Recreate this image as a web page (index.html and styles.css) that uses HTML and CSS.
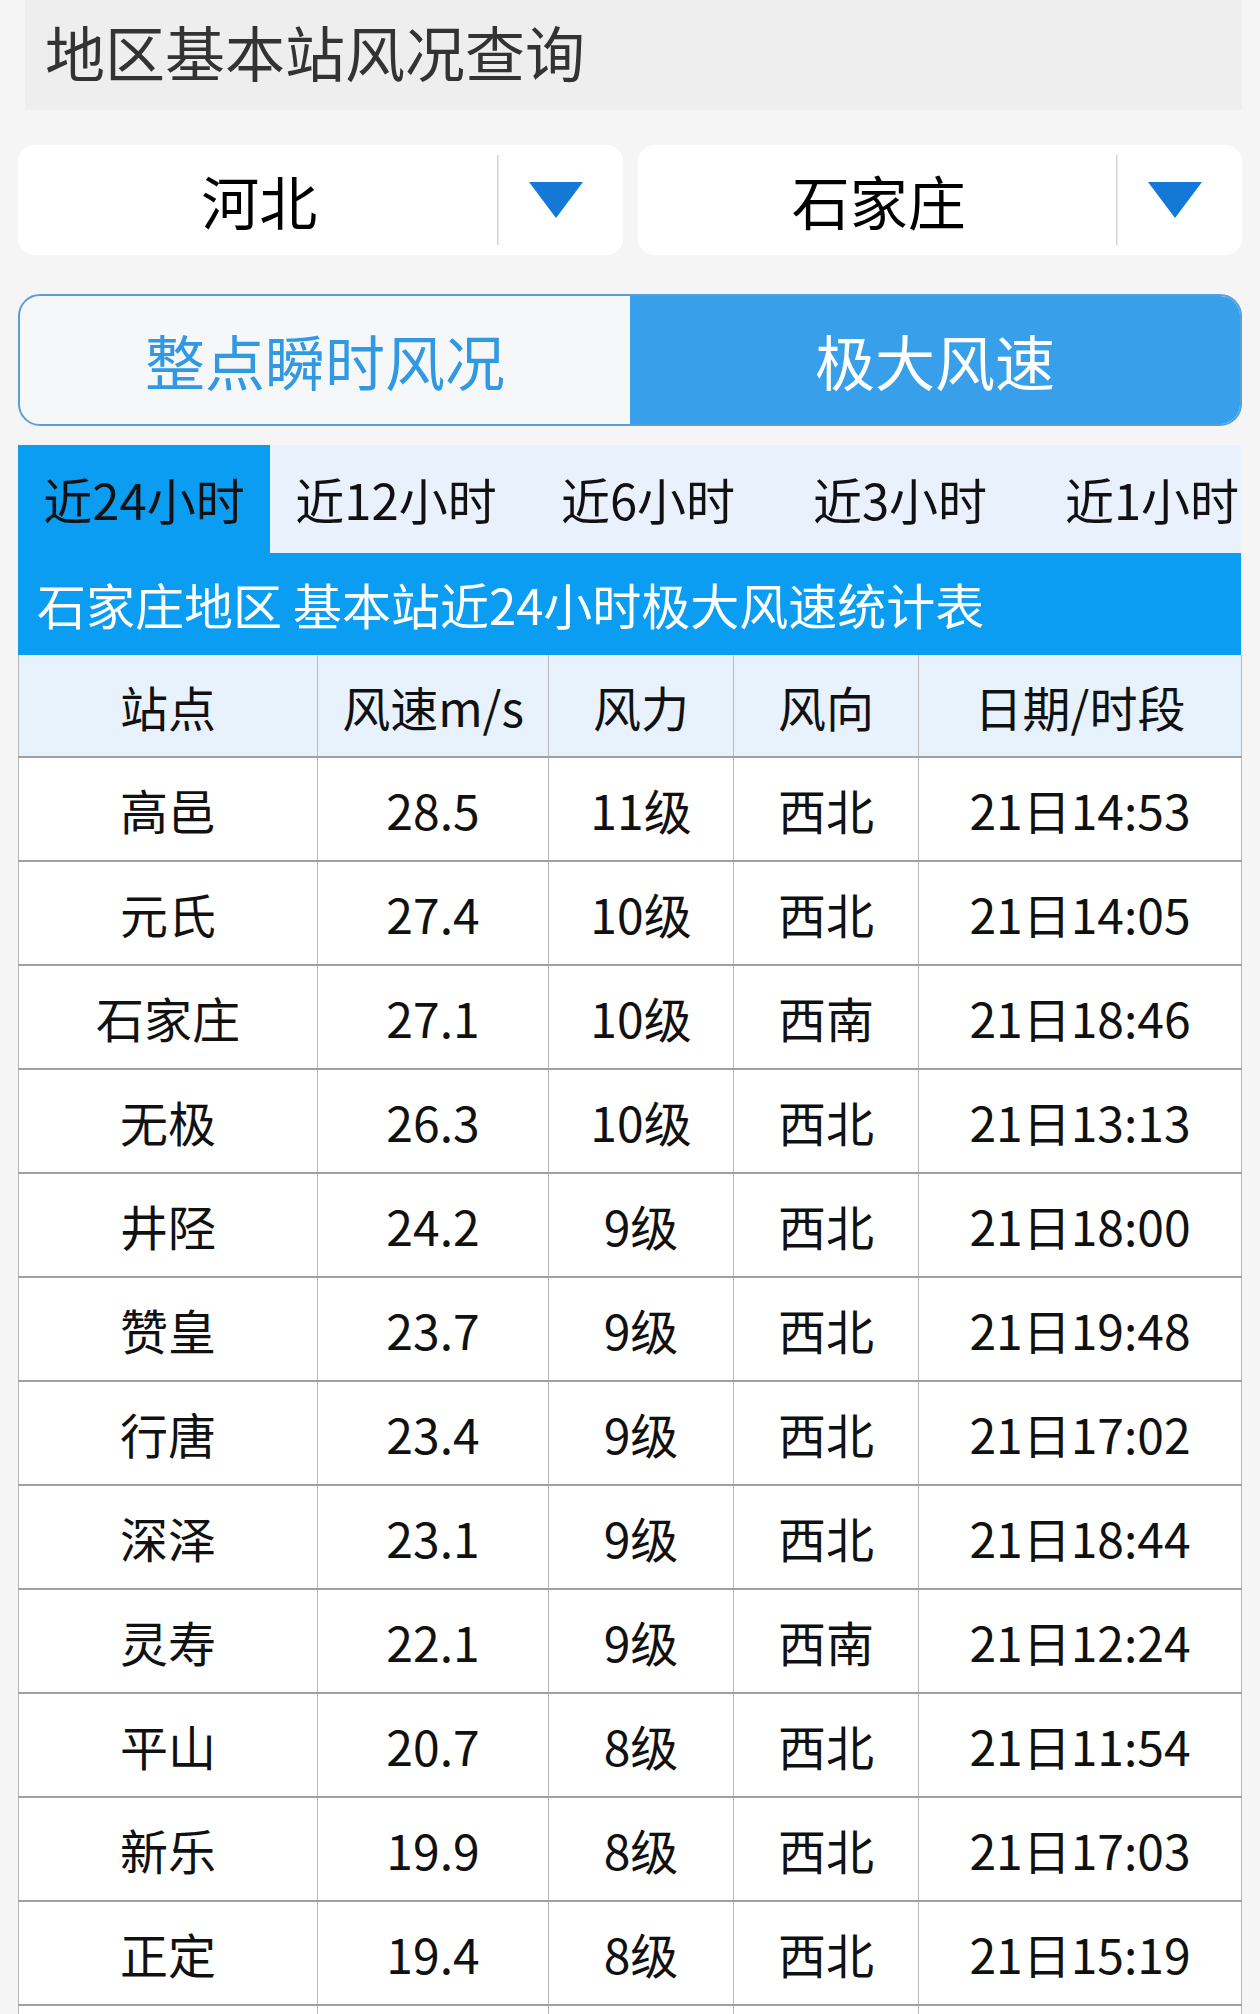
FILE: index.html
```html
<!DOCTYPE html>
<html lang="zh-CN">
<head>
<meta charset="utf-8">
<title>地区基本站风况查询</title>
<link rel="stylesheet" href="styles.css">
</head>
<body>
<div class="page">
  <div class="topbar"><h1 class="title">地区基本站风况查询</h1></div>

  <div class="selects">
    <div class="select">
      <div class="sel-text">河北</div>
      <div class="sel-sep"></div>
      <div class="sel-arrow"><span class="tri"></span></div>
    </div>
    <div class="select">
      <div class="sel-text">石家庄</div>
      <div class="sel-sep"></div>
      <div class="sel-arrow"><span class="tri"></span></div>
    </div>
  </div>

  <div class="toggle">
    <div class="tg-item">整点瞬时风况</div>
    <div class="tg-item tg-active">极大风速</div>
  </div>

  <div class="tabs">
    <div class="tab tab-active">近24小时</div>
    <div class="tab">近12小时</div>
    <div class="tab">近6小时</div>
    <div class="tab">近3小时</div>
    <div class="tab">近1小时</div>
  </div>

  <div class="caption">石家庄地区 基本站近24小时极大风速统计表</div>

  <table class="grid">
    <colgroup>
      <col class="c1"><col class="c2"><col class="c3"><col class="c4"><col class="c5">
    </colgroup>
    <thead>
      <tr><th>站点</th><th>风速m/s</th><th>风力</th><th>风向</th><th>日期/时段</th></tr>
    </thead>
    <tbody>
      <tr><td>高邑</td><td>28.5</td><td>11级</td><td>西北</td><td>21日14:53</td></tr>
      <tr><td>元氏</td><td>27.4</td><td>10级</td><td>西北</td><td>21日14:05</td></tr>
      <tr><td>石家庄</td><td>27.1</td><td>10级</td><td>西南</td><td>21日18:46</td></tr>
      <tr><td>无极</td><td>26.3</td><td>10级</td><td>西北</td><td>21日13:13</td></tr>
      <tr><td>井陉</td><td>24.2</td><td>9级</td><td>西北</td><td>21日18:00</td></tr>
      <tr><td>赞皇</td><td>23.7</td><td>9级</td><td>西北</td><td>21日19:48</td></tr>
      <tr><td>行唐</td><td>23.4</td><td>9级</td><td>西北</td><td>21日17:02</td></tr>
      <tr><td>深泽</td><td>23.1</td><td>9级</td><td>西北</td><td>21日18:44</td></tr>
      <tr><td>灵寿</td><td>22.1</td><td>9级</td><td>西南</td><td>21日12:24</td></tr>
      <tr><td>平山</td><td>20.7</td><td>8级</td><td>西北</td><td>21日11:54</td></tr>
      <tr><td>新乐</td><td>19.9</td><td>8级</td><td>西北</td><td>21日17:03</td></tr>
      <tr><td>正定</td><td>19.4</td><td>8级</td><td>西北</td><td>21日15:19</td></tr>
      <tr><td></td><td></td><td></td><td></td><td></td></tr>
    </tbody>
  </table>
</div>
</body>
</html>
```

FILE: styles.css
```css
* { box-sizing: border-box; }

html, body {
  margin: 0;
  padding: 0;
  background: #f5f5f5;
  font-family: "Noto Sans CJK SC", "Noto Sans", sans-serif;
  color: #111;
}

.page {
  width: 1260px;
  padding: 0 18px;
}

.topbar {
  height: 110px;
  margin-left: 7px;
  background: #eeeeee;
  display: flex;
  align-items: center;
  padding-left: 20px;
  padding-bottom: 8px;
}

.title {
  margin: 0;
  font-size: 60px;
  font-weight: 400;
  color: #333;
  line-height: 1;
}

.selects {
  margin-top: 35px;
  display: flex;
  gap: 15px;
}

.select {
  flex: 1;
  height: 110px;
  background: #fff;
  border-radius: 16px;
  display: flex;
  align-items: center;
}

.sel-text {
  flex: 1;
  text-align: center;
  font-size: 58px;
  line-height: 1;
  color: #000;
  padding-left: 4px;
}

.sel-sep {
  width: 2px;
  height: 90px;
  background: linear-gradient(to right, #cfcfcf, #efefef);
}

.sel-arrow {
  width: 124px;
  display: flex;
  justify-content: center;
  padding-right: 10px;
}

.tri {
  width: 0;
  height: 0;
  border-left: 27px solid transparent;
  border-right: 27px solid transparent;
  border-top: 36px solid #1479d6;
}

.toggle {
  margin-top: 39px;
  height: 132px;
  display: flex;
  border: 2px solid #5b9edb;
  border-radius: 22px;
  overflow: hidden;
  background: #f6f7f9;
}

.tg-item {
  flex: 1;
  display: flex;
  align-items: center;
  justify-content: center;
  font-size: 60px;
  color: #3198e2;
  line-height: 1;
}

.tg-active {
  background: #38a0ea;
  color: #fff;
}

.tabs {
  margin-top: 19px;
  width: 1223px;
  height: 108px;
  background: #e9f2fc;
  display: flex;
  overflow: hidden;
  white-space: nowrap;
}

.tab {
  flex: 0 0 252px;
  text-align: center;
  font-size: 49px;
  line-height: 108px;
  color: #111;
}

.tab-active {
  background: #0a9df2;
}

.caption {
  width: 1223px;
  height: 102px;
  background: #0a9df2;
  color: #fff;
  font-size: 49px;
  line-height: 102px;
  padding-left: 19px;
  white-space: nowrap;
}

.grid {
  width: 1223px;
  border-collapse: collapse;
  table-layout: fixed;
  background: #fff;
}

.c1 { width: 299px; }
.c2 { width: 231px; }
.c3 { width: 185px; }
.c4 { width: 185px; }
.c5 { width: 323px; }

.grid th,
.grid td {
  padding: 0;
  text-align: center;
  font-size: 48px;
  font-weight: 400;
  color: #111;
  border-left: 1px solid #b8b8b8;
  border-right: 1px solid #b8b8b8;
  border-bottom: 2px solid #a0a0a0;
  line-height: 1;
}

.grid th {
  height: 102px;
  background: #e8f2fd;
}

.grid td {
  height: 104px;
}
```
